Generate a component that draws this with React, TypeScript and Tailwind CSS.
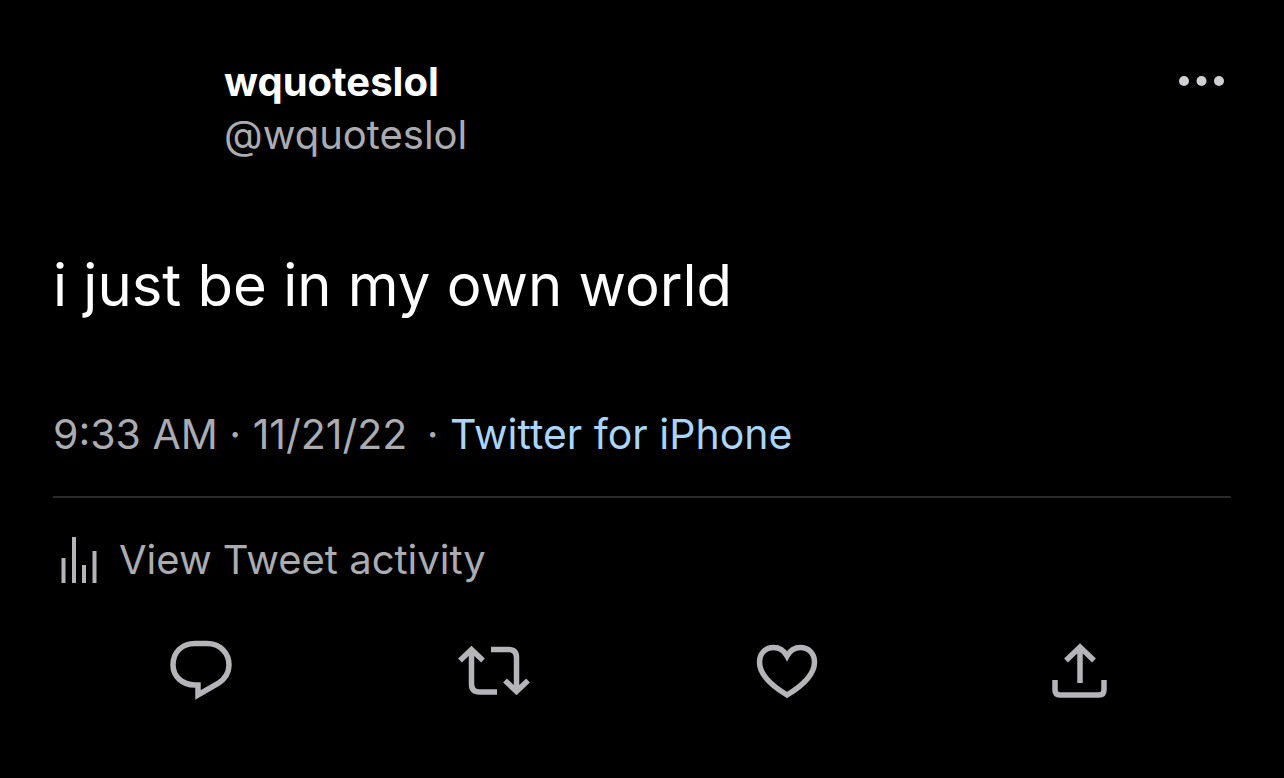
import React from "react";

const icon = "fill-none stroke-[#b4b4b9]";

export default function App() {
  return (
    <main className="min-h-screen bg-black px-[53px] pt-[55px] font-['Inter','Liberation_Sans',sans-serif] text-[#acacb0]">
      <article>
        <header className="flex items-start justify-between">
          <div className="pl-[171px]">
            <h1 className="text-[40px] leading-[53px] font-bold text-white">wquoteslol</h1>
            <p className="text-[40px] leading-[53px]">@wquoteslol</p>
          </div>
          <button type="button" aria-label="More options" className="mt-4">
            <svg width="53" height="20" viewBox="0 0 53 20" className="fill-[#d0d0d4]">
              <circle cx="6" cy="10" r="5" />
              <circle cx="23.5" cy="10" r="5" />
              <circle cx="41" cy="10" r="5" />
            </svg>
          </button>
        </header>
        <p className="mt-[86px] text-[58px] leading-[76px] text-white">i just be in my own world</p>
        <p className="mt-[85px] text-[41px] leading-[52px]">
          9:33 AM · <time dateTime="2022-11-21" className="mr-2">11/21/22</time> ·{" "}
          <a href="#source" className="text-[#abd4f6]">Twitter for iPhone</a>
        </p>
        <hr className="mt-9 border-t-2 border-[#2b2b2b]" />
        <a href="#activity" className="mt-9 flex items-center gap-5 text-[40px] leading-[52px]">
          <svg width="46" height="50" viewBox="0 0 46 50" className={icon} strokeWidth="4">
            <path d="M10.5 23V48M21 2V48M31 30V48M41.5 16V48" />
          </svg>
          View Tweet activity
        </a>
      </article>
      <nav aria-label="Tweet actions" className="mt-[46px] mr-1 grid grid-cols-4">
        <button type="button" aria-label="Reply" className="flex justify-center">
          <svg width="80" height="80" viewBox="0 0 80 80" className={icon} strokeWidth="5.5">
            <path d="M38 53H35C22 53 13 44 13 33C13 20 22 11.5 35 11.5H47C60 11.5 69 21 69 33C69 41 65 47 58 51.5L38 63V53Z" />
          </svg>
        </button>
        <button type="button" aria-label="Retweet" className="flex justify-center">
          <svg width="80" height="80" viewBox="0 0 80 80" className={icon} strokeWidth="5.5">
            <path d="M7 28.5L18.5 17.5L30 28.5M18.5 18V52Q18.5 60 26.5 60H44M38 17.5H55.5Q63.5 17.5 63.5 25.5V59M52 48.5L63.5 59.5L75 48.5" />
          </svg>
        </button>
        <button type="button" aria-label="Like" className="flex justify-center">
          <svg width="80" height="80" viewBox="0 0 80 80" className={icon} strokeWidth="5.5">
            <path d="M40 63C25 54 12.5 42 12.5 30C12.5 21 19 15.5 26.5 15.5C32.5 15.5 37 18.5 40 24C43 18.5 47.5 15.5 53.5 15.5C61 15.5 67.5 21 67.5 30C67.5 42 55 54 40 63Z" />
          </svg>
        </button>
        <button type="button" aria-label="Share" className="flex justify-center">
          <svg width="80" height="80" viewBox="0 0 80 80" className={icon} strokeWidth="5.5">
            <path d="M40 51V16M26 28.5L40 15L54 28.5M15 48V58Q15 63 20 63H59Q64 63 64 58V48" />
          </svg>
        </button>
      </nav>
    </main>
  );
}
